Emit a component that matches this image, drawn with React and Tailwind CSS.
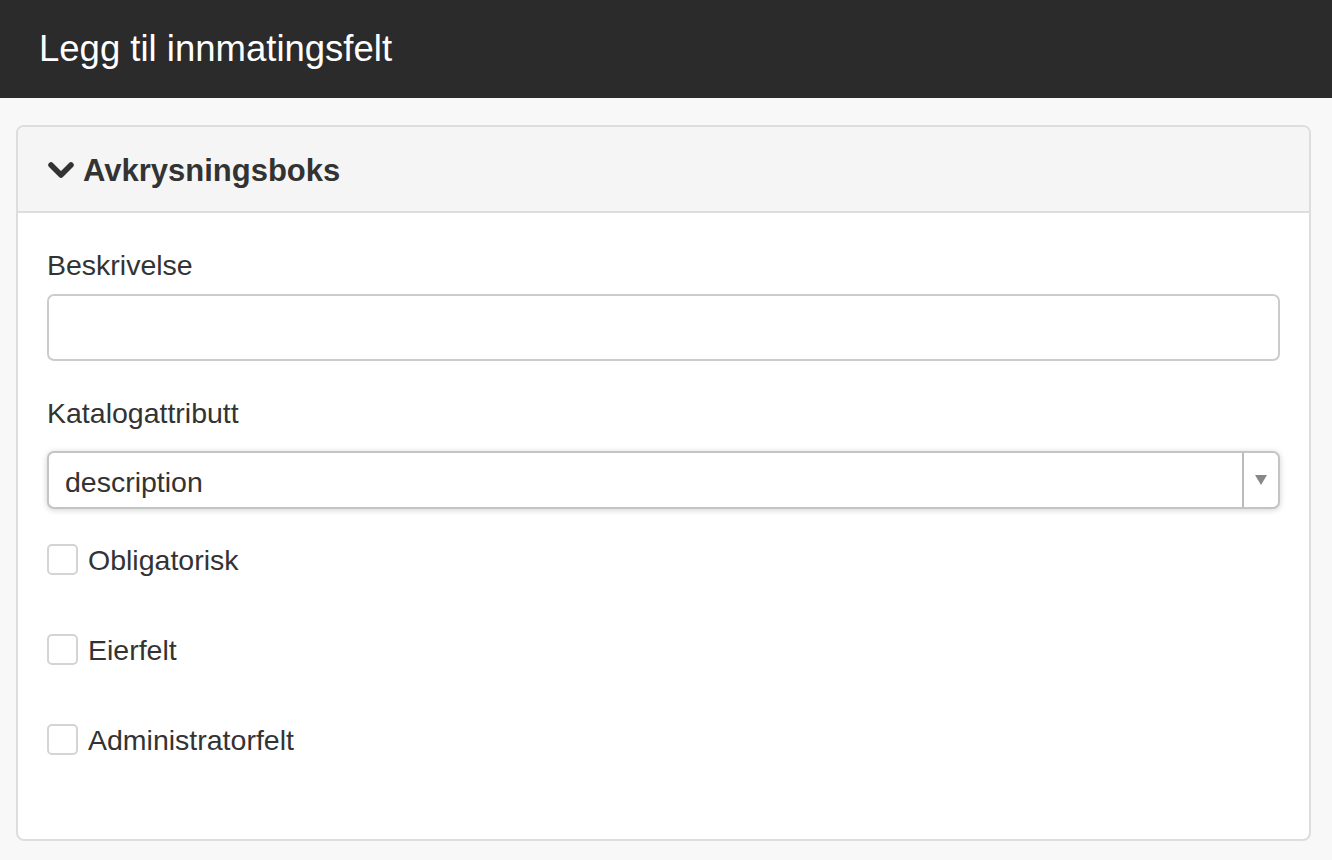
function Checkbox({ label }) {
  return (
    <label className="flex items-center h-[30px] gap-[10px]">
      <span className="w-[31px] h-[31px] rounded-[5px] border-2 border-[#d4d4d4] bg-white shrink-0" />
      <span className="text-[28.5px] text-[#333] translate-y-[1px]">{label}</span>
    </label>
  );
}

export default function App() {
  return (
    <div className="min-h-[860px] bg-[#f8f8f8] font-['Liberation_Sans',Arial,sans-serif]">
      {/* Title bar */}
      <div className="h-[98px] bg-[#2b2b2b] flex items-center px-[39px]">
        <h1 className="text-[36.5px] text-white">Legg til innmatingsfelt</h1>
      </div>

      <div className="pl-[16px] pr-[21px] pt-[27px] pb-[19px]">
        <div className="border-2 border-[#dddddd] rounded-[8px] bg-white overflow-hidden">
          {/* Panel heading */}
          <div className="h-[86px] bg-[#f5f5f5] border-b-2 border-[#dddddd] flex items-center pl-[29px] gap-[8px]">
            <svg width="28" height="20" viewBox="0 0 28 20" className="text-[#333] translate-y-[1px]">
              <polyline points="4,5 14,15 24,5" fill="none" stroke="currentColor" strokeWidth="5.5" strokeLinecap="round" strokeLinejoin="round" />
            </svg>
            <span className="text-[31px] font-bold text-[#333] translate-y-[2px]">Avkrysningsboks</span>
          </div>

          {/* Panel body */}
          <div className="px-[29px] pt-[38px] pb-[85px] flex flex-col">
            <label className="text-[28.5px] text-[#333] leading-none">Beskrivelse</label>
            <input
              type="text"
              className="mt-[14px] h-[67px] w-full rounded-[7px] border-2 border-[#cccccc] bg-white outline-none px-4 text-[28px]"
            />

            <label className="mt-[38px] text-[28.5px] text-[#333] leading-none">Katalogattributt</label>
            <div className="mt-[24px] h-[58px] w-full rounded-[7px] border-2 border-[#c4c4c4] bg-white shadow-[0_1px_6px_rgba(0,0,0,0.18)] flex items-stretch">
              <span className="flex-1 flex items-center px-[16px] text-[28.5px] text-[#333] translate-y-[2px]">description</span>
              <span className="w-[36px] border-l-2 border-[#bbbbbb] flex items-center justify-center">
                <span className="w-0 h-0 border-l-[6px] border-r-[6px] border-t-[10px] border-l-transparent border-r-transparent border-t-[#888]" />
              </span>
            </div>

            <div className="mt-[35px] flex flex-col gap-[60px]">
              <Checkbox label="Obligatorisk" />
              <Checkbox label="Eierfelt" />
              <Checkbox label="Administratorfelt" />
            </div>
          </div>
        </div>
      </div>
    </div>
  );
}
